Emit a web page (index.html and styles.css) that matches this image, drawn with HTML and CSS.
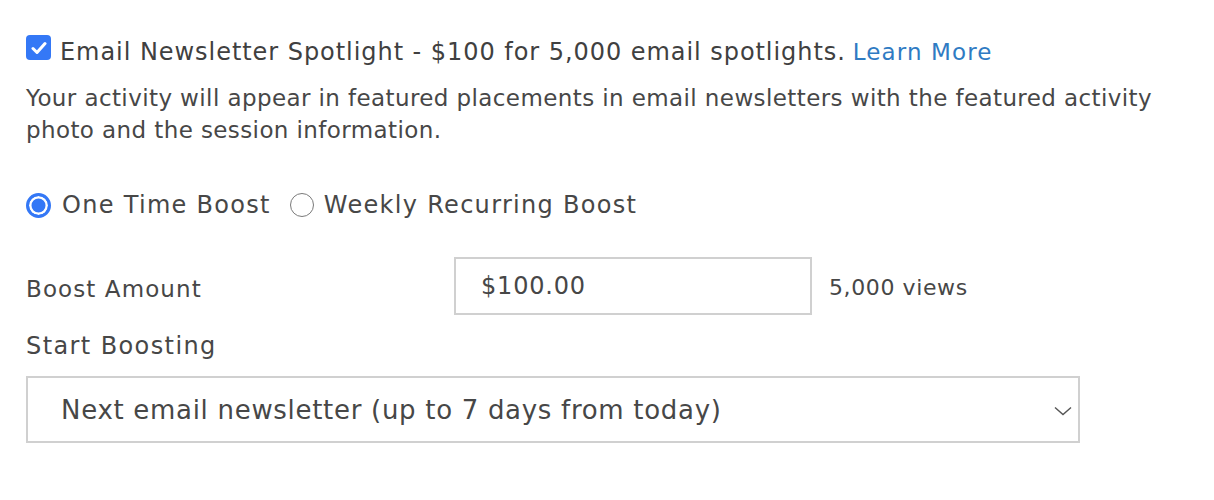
FILE: index.html
```html
<!DOCTYPE html>
<html lang="en">
<head>
    <meta charset="UTF-8">
    <meta name="viewport" content="width=device-width, initial-scale=1.0">
    <title>Boost Activity</title>
    <link rel="stylesheet" href="styles.css">
</head>
<body>

<div class="boost-panel">
    <label class="option-header">
        <span class="check-box">
            <svg width="16" height="14" viewBox="0 0 16 14"><path d="M2 7.5 L6 11.5 L14 2.5" fill="none" stroke="#fff" stroke-width="3" stroke-linecap="round" stroke-linejoin="round"/></svg>
        </span>
        <span class="option-title">Email Newsletter Spotlight - $100 for 5,000 email spotlights.</span>
        <a href="#" class="learn-more">Learn More</a>
    </label>
    <p class="option-desc">Your activity will appear in featured placements in email newsletters with the featured activity photo and the session information.</p>

    <div class="boost-type">
        <label class="radio-item"><span class="radio checked"></span>One Time Boost</label>
        <label class="radio-item"><span class="radio"></span>Weekly Recurring Boost</label>
    </div>

    <div class="form-row">
        <span class="row-label">Boost Amount</span>
        <div class="amount-box">$100.00</div>
        <span class="views">5,000 views</span>
    </div>

    <div class="start-label">Start Boosting</div>
    <div class="select-box">
        <span>Next email newsletter (up to 7 days from today)</span>
        <svg class="chevron" width="18" height="10" viewBox="0 0 18 10"><path d="M1 1.5 L9 8.5 L17 1.5" fill="none" stroke="#555" stroke-width="1.4"/></svg>
    </div>
</div>

</body>
</html>
```

FILE: styles.css
```css
body {
    font-family: "DejaVu Sans", Arial, sans-serif;
    color: #474747;
    background-color: white;
    margin: 0;
}
.boost-panel {
    padding: 37px 26px 0 26px;
}
.option-header {
    display: flex;
    align-items: center;
    font-size: 24px;
    line-height: 30px;
    letter-spacing: 0.95px;
}
.check-box {
    width: 25px;
    height: 25px;
    border-radius: 4px;
    background-color: #3478f6;
    display: flex;
    align-items: center;
    justify-content: center;
    margin-right: 9px;
    align-self: flex-start;
    margin-top: -2px;
}
.option-title {
    color: #404040;
    margin-right: 7px;
}
.learn-more {
    color: #2f7bc3;
    text-decoration: none;
    font-size: 23px;
    letter-spacing: 1.1px;
}
.option-desc {
    font-size: 23px;
    line-height: 32px;
    letter-spacing: 0.4px;
    margin: 15px 0 0 0;
}
.boost-type {
    display: flex;
    align-items: center;
    gap: 19px;
    font-size: 24px;
    line-height: 30px;
    letter-spacing: 1.3px;
    margin-top: 44px;
}
.radio-item {
    display: flex;
    align-items: center;
}
.radio {
    width: 24px;
    height: 24px;
    border: 1.5px solid #7a7a7a;
    border-radius: 50%;
    margin-right: 10px;
    box-sizing: border-box;
}
.radio.checked {
    border: 3px solid #3478f6;
    box-shadow: inset 0 0 0 2.5px white;
    background-color: #3478f6;
    width: 25px;
    height: 25px;
    margin-right: 11px;
}
.form-row {
    display: grid;
    grid-template-columns: 428px 358px auto;
    align-items: center;
    margin-top: 37px;
}
.row-label {
    font-size: 23px;
    letter-spacing: 1.1px;
    padding-top: 5px;
}
.amount-box {
    height: 58px;
    box-sizing: border-box;
    border: 2px solid #d0d0d0;
    padding: 0 25px;
    display: flex;
    align-items: center;
    font-size: 24px;
    letter-spacing: 0.8px;
}
.views {
    font-size: 22px;
    letter-spacing: 0.6px;
    padding-left: 17px;
    padding-top: 2px;
}
.start-label {
    font-size: 24px;
    line-height: 30px;
    letter-spacing: 1.4px;
    margin-top: 16px;
}
.select-box {
    width: 1054px;
    height: 67px;
    box-sizing: border-box;
    border: 2px solid #d0d0d0;
    margin-top: 15px;
    padding: 0 6px 0 33px;
    display: flex;
    align-items: center;
    justify-content: space-between;
    font-size: 26px;
    letter-spacing: 0.7px;
}
.chevron {
    margin-top: 2px;
}
```
